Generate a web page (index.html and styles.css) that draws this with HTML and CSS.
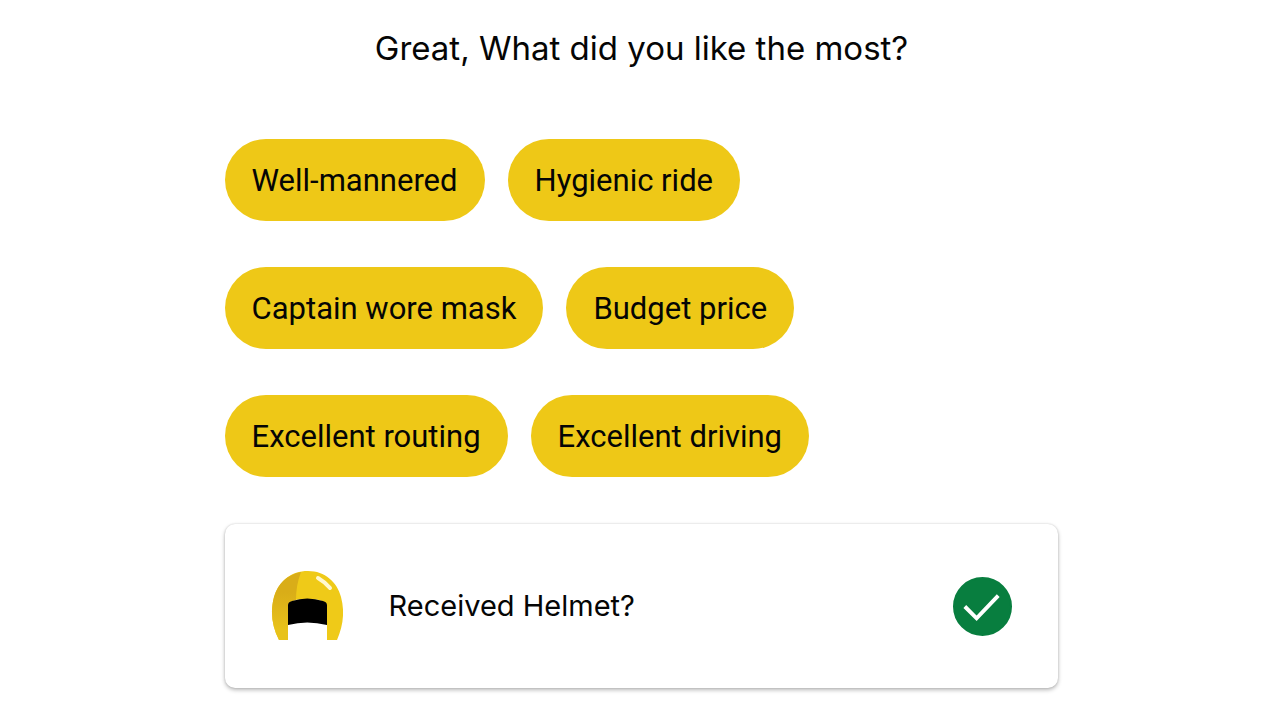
FILE: index.html
```html
<!DOCTYPE html>
<html lang="en">
<head>
<meta charset="utf-8">
<title>Ride feedback</title>
<link rel="stylesheet" href="styles.css">
</head>
<body>
<main class="feedback">
  <h1 class="title">Great, What did you like the most?</h1>
  <div class="rows">
    <div class="row"><button class="chip" type="button">Well-mannered</button><button class="chip" type="button">Hygienic ride</button></div>
    <div class="row"><button class="chip" type="button">Captain wore mask</button><button class="chip" type="button">Budget price</button></div>
    <div class="row"><button class="chip" type="button">Excellent routing</button><button class="chip" type="button">Excellent driving</button></div>
  </div>
  <div class="card">
    <svg class="helmet" viewBox="0 0 72 72" aria-hidden="true">
      <defs><linearGradient id="shade" x1="0" y1="0" x2="0" y2="1"><stop offset="0.3" stop-color="#d9ad18"/><stop offset="0.85" stop-color="#e8c21a"/></linearGradient></defs>
      <path fill="#efca18" d="M37 1C54 1 66 12 70 27C74 42 72 56 66 70H56V35Q53 29 36 29T17 35V70H8C1 56-1 42 3 27C8 11 20 1 37 1Z"/>
      <path fill="url(#shade)" d="M30 2Q25 15 25 30Q18 31 17 35V70H8C1 56-1 42 3 27C7 13 16 5 30 2Z"/>
      <path fill="#000" d="M17 55V35Q17 32 21 31Q36 26 52 31Q56 32 56 35V55Q36 50 17 55Z"/>
      <path fill="none" stroke="#fff8d0" stroke-width="4" stroke-linecap="round" d="M47 8Q54 12 59 18"/>
    </svg>
    <label class="question" for="helmet">Received Helmet?</label>
    <span class="check">
      <input class="check-input" type="checkbox" id="helmet" checked>
      <svg class="check-mark" viewBox="0 0 60 60" aria-hidden="true"><path d="M12 30L24 42L46 19"/></svg>
    </span>
  </div>
</main>
</body>
</html>
```

FILE: styles.css
```css
* { box-sizing: border-box; }
body { margin: 0; padding-left: 3px; background: #fff; color: #050505; font-family: Roboto, sans-serif; }
.feedback { width: 65.3%; margin: 0 auto; padding: 24px 0 32px; }
.title { margin: 0 0 67px; font: 400 33px/48px Inter, sans-serif; text-align: center; }
.rows { display: flex; flex-direction: column; gap: 46px; }
.row { display: flex; flex-wrap: wrap; gap: 23px; }
.chip { border: 0; border-radius: 41px; padding: 2px 27px 0; height: 82px; background: #eec817; color: #050505; font: 400 31px/40px Roboto, sans-serif; }
.card { display: flex; align-items: center; margin-top: 47px; padding: 46px; border-radius: 10px; background: #fff; box-shadow: 0 2px 4px rgba(0,0,0,.28), 0 0 2px rgba(0,0,0,.16); }
.helmet { width: 72px; height: 72px; margin-right: 46px; }
.question { flex: 1; font: 400 29px/40px Inter, sans-serif; }
.check { display: grid; width: 59px; height: 59px; }
.check-input { appearance: none; grid-area: 1 / 1; width: 59px; height: 59px; margin: 0; border-radius: 50%; background: #fff; border: 2px solid #087e3f; }
.check-input:checked { background: #087e3f; }
.check-mark { grid-area: 1 / 1; width: 59px; height: 59px; pointer-events: none; fill: none; stroke: #fff; stroke-width: 4; }
```
